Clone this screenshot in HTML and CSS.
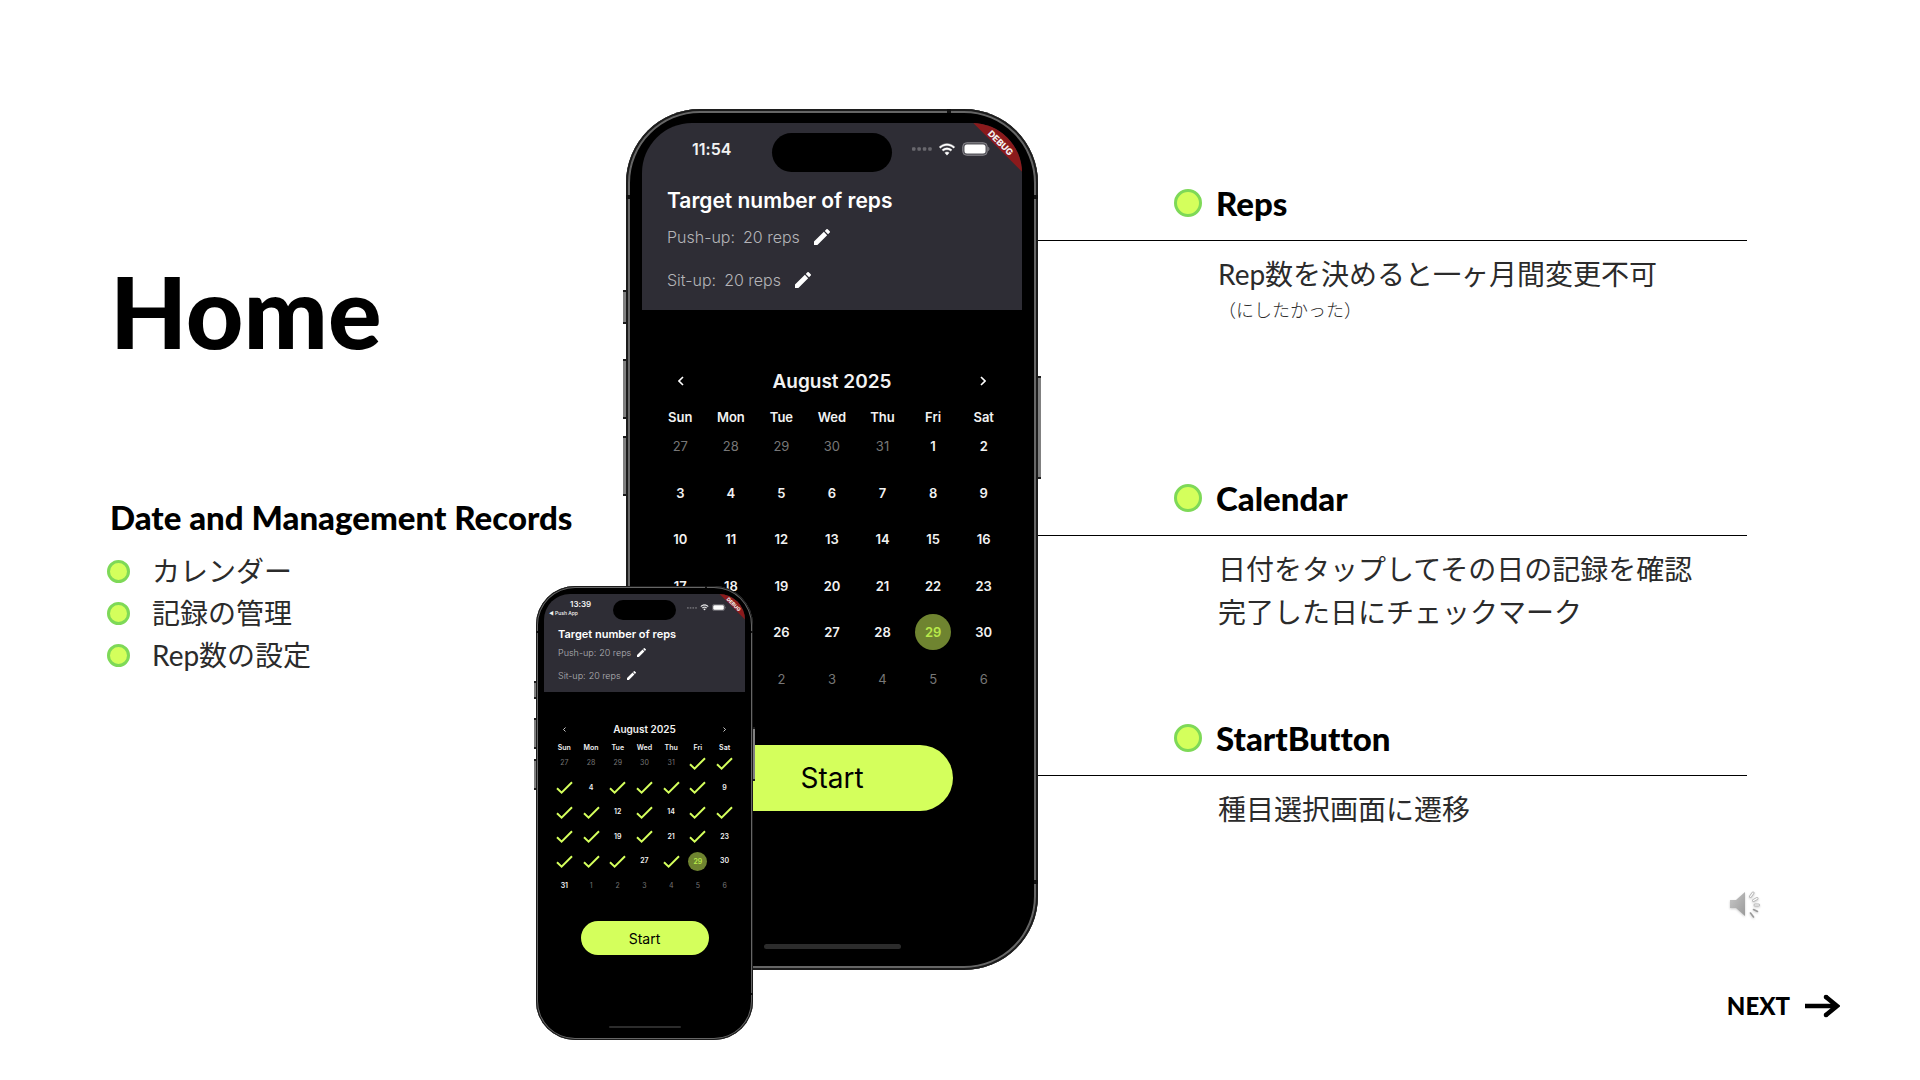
FILE: index.html
```html
<!DOCTYPE html>
<html lang="ja">
<head>
<meta charset="utf-8">
<meta name="viewport" content="width=device-width, initial-scale=1">
<title>Home</title>
<link rel="stylesheet" href="styles.css">
</head>
<body>
<svg class="sprite" aria-hidden="true">
  <symbol id="pencil" viewBox="3 3 18 18"><path d="M3 17.200V21h3.800L17.800 9.900l-3.700-3.700zM20.700 7a1 1 0 0 0 0-1.400l-2.300-2.300a1 1 0 0 0-1.400 0l-1.900 1.900 3.700 3.700z"/></symbol>
  <symbol id="wifi" viewBox="0 0 18 13"><path d="M9 2.600c2.500 0 4.800 1 6.500 2.600l1.300-1.300C14.800 2 12 .7 9 .7S3.200 2 1.200 3.900l1.300 1.300C4.200 3.600 6.500 2.600 9 2.600zm0 4.100c1.400 0 2.700.5 3.700 1.400L14 6.800A7.200 7.200 0 0 0 9 4.800a7.200 7.200 0 0 0-5 2l1.300 1.300c1-.9 2.300-1.400 3.700-1.400zm0 2.200c-.8 0-1.600.3-2.200.8L9 12.200l2.200-2.500c-.6-.5-1.400-.8-2.200-.8z" stroke="#fff" stroke-width=".4"/></symbol>
  <symbol id="battery" viewBox="0 0 28 14"><rect x=".7" y=".7" width="24.600" height="12.600" rx="4" fill="#55545b" stroke="#85848a"/><rect x="2.500" y="2.500" width="21" height="9" rx="2.500"/><path d="M26.400 4.800c1.200.5 1.200 3.900 0 4.400z" opacity=".5"/></symbol>
  <symbol id="dots" viewBox="0 0 20 4"><g opacity=".28"><rect width="3.500" height="3.500" y=".2" rx="1"/><rect x="5.400" width="3.500" height="3.500" y=".2" rx="1"/><rect x="10.800" width="3.500" height="3.500" y=".2" rx="1"/><rect x="16.200" width="3.500" height="3.500" y=".2" rx="1"/></g></symbol>
  <symbol id="prev" viewBox="0 0 6 10"><path d="M5 1 1 5l4 4" fill="none" stroke="#fff" stroke-width="1.600"/></symbol>
  <symbol id="next" viewBox="0 0 6 10"><path d="M1 1l4 4-4 4" fill="none" stroke="#fff" stroke-width="1.600"/></symbol>
  <symbol id="check" viewBox="0 0 17 13"><path d="M1 7.200 5.600 11.600 16 1.200" fill="none" stroke="#d4ff5c" stroke-width="2"/></symbol>
</svg>

<main class="slide">
  <section class="intro">
    <h1>Home</h1>
    <h2>Date and Management Records</h2>
    <ul>
      <li>カレンダー</li>
      <li>記録の管理</li>
      <li>Rep数の設定</li>
    </ul>
  </section>

  <div class="phones">
    <article class="phone phone-large">
      <i class="key k1"></i><i class="key k2"></i><i class="key k3"></i><i class="key k4"></i>
      <i class="gap g1"></i><i class="gap g2"></i><i class="gap g3"></i><i class="gap g4"></i>
      <div class="screen">
        <header class="target">
          <div class="status">
            <div class="clock"><time>11:54</time></div>
            <div class="island"></div>
            <div class="signals"><svg class="dots"><use href="#dots"/></svg><svg class="wifi"><use href="#wifi"/></svg><svg class="battery"><use href="#battery"/></svg></div>
          </div>
          <h3>Target number of reps</h3>
          <p><span>Push-up:</span><span>20 reps</span><button aria-label="Edit push-up"><svg><use href="#pencil"/></svg></button></p>
          <p><span>Sit-up:</span><span>20 reps</span><button aria-label="Edit sit-up"><svg><use href="#pencil"/></svg></button></p>
        </header>
        <div class="ribbon">DEBUG</div>
        <nav class="month"><button aria-label="Previous month"><svg><use href="#prev"/></svg></button><span>August 2025</span><button aria-label="Next month"><svg><use href="#next"/></svg></button></nav>
        <table>
          <thead><tr><th>Sun</th><th>Mon</th><th>Tue</th><th>Wed</th><th>Thu</th><th>Fri</th><th>Sat</th></tr></thead>
          <tbody>
            <tr><td class="out">27</td><td class="out">28</td><td class="out">29</td><td class="out">30</td><td class="out">31</td><td>1</td><td>2</td></tr>
            <tr><td>3</td><td>4</td><td>5</td><td>6</td><td>7</td><td>8</td><td>9</td></tr>
            <tr><td>10</td><td>11</td><td>12</td><td>13</td><td>14</td><td>15</td><td>16</td></tr>
            <tr><td>17</td><td>18</td><td>19</td><td>20</td><td>21</td><td>22</td><td>23</td></tr>
            <tr><td></td><td></td><td>26</td><td>27</td><td>28</td><td><span class="today">29</span></td><td>30</td></tr>
            <tr><td></td><td></td><td class="out">2</td><td class="out">3</td><td class="out">4</td><td class="out">5</td><td class="out">6</td></tr>
          </tbody>
        </table>
        <button class="start">Start</button>
        <div class="homebar"></div>
      </div>
    </article>

    <article class="phone phone-small">
      <i class="key k1"></i><i class="key k2"></i><i class="key k3"></i><i class="key k4"></i>
      <i class="gap g1"></i><i class="gap g2"></i><i class="gap g3"></i><i class="gap g4"></i>
      <div class="screen">
        <header class="target">
          <div class="status">
            <div class="clock"><time>13:39</time><a href="#">◀ Push App</a></div>
            <div class="island"></div>
            <div class="signals"><svg class="dots"><use href="#dots"/></svg><svg class="wifi"><use href="#wifi"/></svg><svg class="battery"><use href="#battery"/></svg></div>
          </div>
          <h3>Target number of reps</h3>
          <p><span>Push-up:</span><span>20 reps</span><button aria-label="Edit push-up"><svg><use href="#pencil"/></svg></button></p>
          <p><span>Sit-up:</span><span>20 reps</span><button aria-label="Edit sit-up"><svg><use href="#pencil"/></svg></button></p>
        </header>
        <div class="ribbon">DEBUG</div>
        <nav class="month"><button aria-label="Previous month"><svg><use href="#prev"/></svg></button><span>August 2025</span><button aria-label="Next month"><svg><use href="#next"/></svg></button></nav>
        <table>
          <thead><tr><th>Sun</th><th>Mon</th><th>Tue</th><th>Wed</th><th>Thu</th><th>Fri</th><th>Sat</th></tr></thead>
          <tbody>
            <tr><td class="out">27</td><td class="out">28</td><td class="out">29</td><td class="out">30</td><td class="out">31</td><td><svg><use href="#check"/></svg></td><td><svg><use href="#check"/></svg></td></tr>
            <tr><td><svg><use href="#check"/></svg></td><td>4</td><td><svg><use href="#check"/></svg></td><td><svg><use href="#check"/></svg></td><td><svg><use href="#check"/></svg></td><td><svg><use href="#check"/></svg></td><td>9</td></tr>
            <tr><td><svg><use href="#check"/></svg></td><td><svg><use href="#check"/></svg></td><td>12</td><td><svg><use href="#check"/></svg></td><td>14</td><td><svg><use href="#check"/></svg></td><td><svg><use href="#check"/></svg></td></tr>
            <tr><td><svg><use href="#check"/></svg></td><td><svg><use href="#check"/></svg></td><td>19</td><td><svg><use href="#check"/></svg></td><td>21</td><td><svg><use href="#check"/></svg></td><td>23</td></tr>
            <tr><td><svg><use href="#check"/></svg></td><td><svg><use href="#check"/></svg></td><td><svg><use href="#check"/></svg></td><td>27</td><td><svg><use href="#check"/></svg></td><td><span class="today">29</span></td><td>30</td></tr>
            <tr><td>31</td><td class="out">1</td><td class="out">2</td><td class="out">3</td><td class="out">4</td><td class="out">5</td><td class="out">6</td></tr>
          </tbody>
        </table>
        <button class="start">Start</button>
        <div class="homebar"></div>
      </div>
    </article>
  </div>

  <div class="notes">
    <section class="note">
      <h2>Reps</h2>
      <p>Rep数を決めると一ヶ月間変更不可</p>
      <p class="aside">（にしたかった）</p>
    </section>
    <section class="note">
      <h2>Calendar</h2>
      <p>日付をタップしてその日の記録を確認</p>
      <p>完了した日にチェックマーク</p>
    </section>
    <section class="note">
      <h2>StartButton</h2>
      <p>種目選択画面に遷移</p>
    </section>
    <button class="sound" aria-label="Play sound">
      <svg viewBox="0 0 32 30">
        <defs><linearGradient id="metal" x1="0" y1="0" x2="1" y2="1"><stop offset="0" stop-color="#c8c8c8"/><stop offset="1" stop-color="#9a9a9a"/></linearGradient></defs>
        <path d="M0 9h6l9-8v24l-9-8H0z" fill="url(#metal)"/>
        <g fill="none" stroke="#b8b8b8" stroke-width="3" stroke-linecap="round"><path d="M20.500 5.500 23 2"/><path d="M23.500 9.500l3.500-2"/><path d="M25 14h3.500"/></g>
        <g fill="none" stroke="#fff" stroke-width="1.200" stroke-linecap="round"><path d="M20.500 5.500 23 2"/><path d="M23.500 9.500l3.500-2"/><path d="M25 14h3.500"/></g>
        <g fill="none" stroke="#999" stroke-width="1.600" stroke-linecap="round"><path d="M23.500 18.500l4 2"/><path d="M20.500 22l3 4"/></g>
      </svg>
    </button>
    <a class="next" href="#">NEXT
      <svg viewBox="0 0 36 24"><path d="M1 12h30M22 3l11 9-11 9" fill="none" stroke="#000" stroke-width="4.600"/><circle cx="22" cy="3" r="2.300"/><circle cx="22" cy="21" r="2.300"/></svg>
    </a>
  </div>
</main>
</body>
</html>
```

FILE: styles.css
```css
*, *::before { box-sizing: border-box; margin: 0; padding: 0; }

body {
  background: #fff;
  color: #000;
  font-family: Lato, "Noto Sans CJK JP", sans-serif;
  font-variant-ligatures: none;
}

button { border: 0; background: none; font: inherit; color: inherit; cursor: pointer; }
a { color: inherit; text-decoration: none; }
svg { display: block; fill: #fff; }
.sprite { position: absolute; width: 0; height: 0; }

.slide {
  display: grid;
  grid-template-columns: 626fr 412px 882fr;
  align-items: start;
  min-height: 100vh;
}

h2 { font-size: 33px; line-height: 34px; font-weight: 900; white-space: nowrap; }

/* Left column */
.intro { padding: 250px 0 0 110px; }
.intro h1 { font-size: 100px; line-height: 120px; font-weight: 900; }
.intro h2 { margin-top: 130px; }
.intro ul { list-style: none; margin-top: 16px; }
.intro li {
  display: flex;
  align-items: center;
  gap: 22px;
  font-size: 28px;
  line-height: 42px;
  color: #2b2b2b;
}
.intro li::before,
.note h2::before {
  content: "";
  border: 3px solid #7ed957;
  border-radius: 50%;
  background: #d4ff5c;
}
.intro li::before { width: 23px; height: 23px; margin-left: -3px; }

/* Right column */
.notes { padding-top: 186px; }
.note { margin-right: 173px; }
.note h2 {
  display: flex;
  align-items: center;
  gap: 14px;
  padding: 0 0 20px 136px;
  margin-bottom: 12px;
  border-bottom: 1px solid #000;
}
.note h2::before { width: 28px; height: 28px; }
.note p {
  padding-left: 180px;
  font-size: 28px;
  line-height: 43px;
  color: #2b2b2b;
}
.note .aside { font-size: 18px; line-height: 28px; font-weight: 300; }
.note:nth-child(2) { margin-top: 157px; }
.note:nth-child(3) { margin-top: 87px; }
.sound { display: block; margin: 60px 158px 0 auto; }
.sound svg { width: 32px; height: 30px; filter: drop-shadow(0 1px 1px #ccc); }
.next {
  display: flex;
  align-items: center;
  justify-content: flex-end;
  gap: 14px;
  margin: 67px 80px 0 0;
  font-size: 24px;
  line-height: 36px;
  font-weight: 900;
}
.next svg { width: 36px; height: 24px; fill: #000; }

/* Phones */
.phones { position: relative; padding-top: 109px; }

.phone {
  position: relative;
  width: var(--w);
  height: var(--h);
  padding: var(--bezel-y) var(--bezel-x);
  border-radius: var(--radius);
  background: #000;
  box-shadow: inset 0 0 0 var(--rim) #1c1c1c, inset 0 0 0 var(--rim2) #666;
  color: #f2f2f2;
  font-family: Inter, "Noto Sans", sans-serif;
}

.phone-large {
  --w: 412px; --h: 861px; --bezel-x: 16px; --bezel-y: 14px;
  --radius: 74px; --screen-radius: 50px; --rim: 2px; --rim2: 4px;
  --status: 58px; --island: 120px; --island-h: 39px;
  --pad: 25px; --title: 21px; --title-h: 28px; --title-gap: 6px;
  --text: 16px; --row: 43px; --gap: 8px; --pencil: 16px; --pencil-gap: 14px;
  --target: 187px; --month-gap: 53px; --month-h: 36px; --month: 19px;
  --grid-w: 354px; --grid-gap: 12px; --row-odd: 46px; --row-even: 47px;
  --week: 12px; --day: 13px;
  --arrow: 10px; --arrow-pad: 23px; --today: 36px;
  --start-gap: 43px; --start-w: 242px; --start-h: 66px; --start: 28px;
  --bar-w: 137px; --bar-h: 5px; --bar-bottom: 7px;
  --key: 3px; --gap-size: 4px;
}

.phone-small {
  position: absolute;
  top: 586px;
  left: -90px;
  --w: 217px; --h: 454px; --bezel-x: 8px; --bezel-y: 8px;
  --radius: 39px; --screen-radius: 26px; --rim: 1px; --rim2: 2px;
  --status: 31px; --island: 63px; --island-h: 20px;
  --pad: 14px; --title: 11px; --title-h: 14px; --title-gap: 2px;
  --text: 9px; --row: 23px; --gap: 3px; --pencil: 9px; --pencil-gap: 6px;
  --target: 98px; --month-gap: 28px; --month-h: 18px; --month: 10px;
  --grid-w: 187px; --grid-gap: 7px; --row-odd: 24px; --row-even: 25px;
  --week: 6px; --day: 7px;
  --arrow: 5px; --arrow-pad: 12px; --today: 19px;
  --start-gap: 23px; --start-w: 128px; --start-h: 34px; --start: 14px;
  --bar-w: 72px; --bar-h: 2px; --bar-bottom: 4px;
  --key: 2px; --gap-size: 2px;
}

.key {
  position: absolute;
  left: calc(-1 * var(--key));
  width: var(--key);
  border-block: 2px solid #1c1c1c;
  background: #808080;
}
.k1 { top: 21%; height: 4%; }
.k2 { top: 29%; height: 7%; }
.k3 { top: 38%; height: 7%; }
.k4 { left: 100%; top: 31%; height: 12%; }

.gap { position: absolute; width: var(--rim2); height: var(--gap-size); background: #111; }
.g1 { left: 0; top: 10%; }
.g2 { right: 0; top: 10%; }
.g3 { right: 0; bottom: 10%; }
.g4 { left: 78%; top: 0; }

.screen {
  position: relative;
  display: flex;
  flex-direction: column;
  align-items: center;
  height: 100%;
  overflow: hidden;
  border-radius: var(--screen-radius);
}

.target { width: 100%; height: var(--target); background: #2e2d35; }
.status {
  display: grid;
  grid-template-columns: 1fr var(--island) 1fr;
  align-items: center;
  height: var(--status);
}
.island { height: var(--island-h); border-radius: 20px; background: #000; }
.clock { font-size: 16px; line-height: 20px; font-weight: 600; padding: 0 0 6px 50px; }
.clock time { display: block; }
.signals { display: flex; align-items: center; gap: 6px; padding: 0 0 6px 20px; }
.dots { width: 20px; height: 4px; }
.wifi { width: 18px; height: 13px; }
.battery { width: 28px; height: 14px; }
.phone-small .clock { font-size: 8px; line-height: 10px; padding: 0 0 3px 5px; }
.phone-small .clock time { padding-left: 21px; }
.phone-small .clock a { display: block; font-size: 5px; line-height: 8px; font-weight: 500; }
.phone-small .signals { gap: 3px; padding: 0 0 4px 11px; }
.phone-small .dots { width: 10px; height: 2px; }
.phone-small .wifi { width: 9px; height: 7px; }
.phone-small .battery { width: 14px; height: 7px; }

.target h3 {
  margin-top: var(--title-gap);
  padding-left: var(--pad);
  font-size: var(--title);
  line-height: var(--title-h);
  font-weight: 600;
  color: #fff;
}
.target p {
  display: flex;
  align-items: center;
  gap: var(--gap);
  height: var(--row);
  padding-left: var(--pad);
  font-size: var(--text);
  font-weight: 300;
  color: #b4b4b8;
}
.target button { margin-left: calc(var(--pencil-gap) - var(--gap)); }
.target button svg { width: var(--pencil); height: var(--pencil); }

.ribbon {
  position: absolute;
  top: 4px;
  right: -45px;
  width: 124px;
  padding-top: 12px;
  transform: rotate(45deg);
  background: #8b1a1c;
  font-size: 9px;
  line-height: 11px;
  font-weight: 800;
  text-align: center;
}
.phone-small .ribbon {
  top: 2px;
  right: -22px;
  width: 62px;
  padding-top: 6px;
  font-size: 5px;
  line-height: 6px;
}

.month {
  display: flex;
  align-items: center;
  justify-content: space-between;
  width: var(--grid-w);
  height: var(--month-h);
  margin-top: var(--month-gap);
  padding: 0 var(--arrow-pad);
  font-size: var(--month);
  font-weight: 600;
}
.month svg { width: calc(var(--arrow) * .6); height: var(--arrow); }

table {
  table-layout: fixed;
  border-collapse: collapse;
  width: var(--grid-w);
  margin-top: var(--grid-gap);
  font-size: var(--day);
  line-height: var(--week);
  text-align: center;
}
thead tr { height: var(--week); }
tbody tr:nth-child(odd) { height: var(--row-odd); }
tbody tr:nth-child(even) { height: var(--row-even); }
th, td { font-weight: 600; vertical-align: middle; }
td svg { width: 17px; height: 13px; margin: 0 auto; }
td.out { font-weight: 400; color: #777; }
.today {
  display: block;
  width: var(--today);
  margin: 0 auto;
  line-height: var(--today);
  border-radius: 50%;
  background: #6f8430;
  color: #b9ea4a;
}

.start {
  flex: none;
  width: var(--start-w);
  height: var(--start-h);
  margin-top: var(--start-gap);
  border-radius: 40px;
  background: #d4ff5c;
  color: #000;
  font-size: var(--start);
  font-weight: 400;
}
.homebar {
  width: var(--bar-w);
  height: var(--bar-h);
  margin: auto 0 var(--bar-bottom);
  border-radius: 3px;
  background: #2c2c2c;
}
```
